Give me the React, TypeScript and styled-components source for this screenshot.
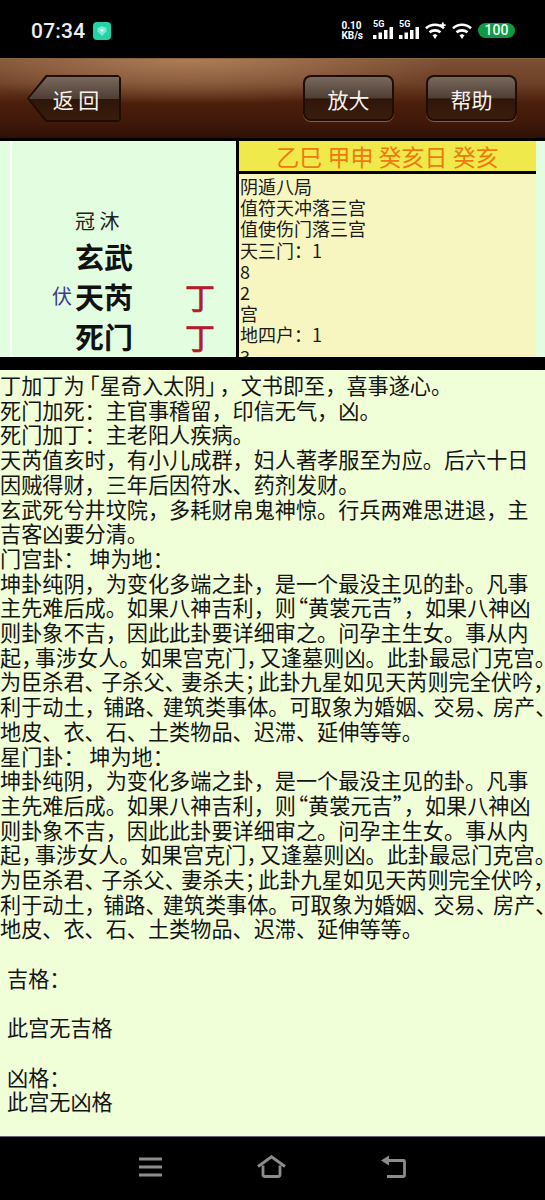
import React from "react";
import styled, { createGlobalStyle } from "styled-components";

const GlobalStyle = createGlobalStyle`
  html, body {
    margin: 0;
    padding: 0;
    background: #000;
  }
  body {
    font-family: "Noto Sans CJK SC", "Liberation Sans", sans-serif;
    text-spacing-trim: space-all;
  }
`;

const luckLines = ["阴遁八局", "值符天冲落三宫", "值使伤门落三宫", "天三门：1", "8", "2", "宫", "地四户：1", "3"];

// how much width each punctuation mark gives up on the squeezed lines
type Squeeze = Record<string, number>;

function Squeezed({ text, marks }: { text: string; marks: Squeeze }) {
  const parts = text.split(/(?=[，、；「」“”])|(?<=[，、；「」“”])/);
  return (
    <Line>
      {parts.map((part, i) =>
        marks[part] ? (
          <Mark key={i} $cut={marks[part]} $before={part === "「" || part === "“"}>
            {part}
          </Mark>
        ) : (
          part
        )
      )}
    </Line>
  );
}

function GuaBlock() {
  return (
    <>
      <Line>坤卦纯阴，为变化多端之卦，是一个最没主见的卦。凡事</Line>
      <Squeezed text="主先难后成。如果八神吉利，则“黄裳元吉”，如果八神凶" marks={{ "“": 9, "”": 10 }} />
      <Line>则卦象不吉，因此此卦要详细审之。问孕主生女。事从内</Line>
      <Squeezed text="起，事涉女人。如果宫克门，又逢墓则凶。此卦最忌门克宫。" marks={{ "，": 7.5 }} />
      <Squeezed text="为臣杀君、子杀父、妻杀夫；此卦九星如见天芮则完全伏吟，" marks={{ "、": 4.5, "；": 7.5 }} />
      <Squeezed text="利于动土，铺路、建筑类事体。可取象为婚姻、交易、房产、" marks={{ "，": 2.5, "、": 4 }} />
      <Line>地皮、衣、石、土类物品、迟滞、延伸等等。</Line>
    </>
  );
}

export default function App() {
  return (
    <Phone>
      <GlobalStyle />
      <StatusBar>
        <Clock>07:34</Clock>
        <AppBadge>
          <svg width="14" height="14" viewBox="0 0 14 14">
            <path d="M7 2l4.500 2v3.500L7 12 2.500 7.500V4z" fill="#7fe8d0" />
            <path d="M5 5.500h4L7 8z" fill="#e8fff8" />
          </svg>
        </AppBadge>
        <StatusRight>
          <NetSpeed>
            <span>0.10</span>
            <span>KB/s</span>
          </NetSpeed>
          <Signal />
          <Signal />
          <Wifi plus />
          <Wifi />
          <Battery>100</Battery>
        </StatusRight>
      </StatusBar>

      <Header>
        <BackButton>
          <BackFace>返 回</BackFace>
        </BackButton>
        <HeaderSpacer />
        <ToolButton>
          <ToolFace>放大</ToolFace>
        </ToolButton>
        <ToolButton>
          <ToolFace>帮助</ToolFace>
        </ToolButton>
      </Header>

      <Panels>
        <PalacePanel>
          <PalaceInner>
            <StateRow>冠 沐</StateRow>
            <GodRow>
              <Name>玄武</Name>
            </GodRow>
            <GodRow>
              <SideMark>伏</SideMark>
              <Name>天芮</Name>
              <Stem>丁</Stem>
            </GodRow>
            <GodRow>
              <Name>死门</Name>
              <Stem>丁</Stem>
            </GodRow>
          </PalaceInner>
        </PalacePanel>
        <InfoPanel>
          <DateBar>乙巳 甲申 癸亥日 癸亥</DateBar>
          <InfoList>
            {luckLines.map((line, i) => (
              <div key={i}>{line}</div>
            ))}
          </InfoList>
        </InfoPanel>
      </Panels>
      <Divider />

      <Body>
        <Squeezed text="丁加丁为「星奇入太阴」，文书即至，喜事遂心。" marks={{ "「": 6, "」": 7 }} />
        <Line>死门加死：主官事稽留，印信无气，凶。</Line>
        <Line>死门加丁：主老阳人疾病。</Line>
        <Line>天芮值亥时，有小儿成群，妇人著孝服至为应。后六十日</Line>
        <Line>因贼得财，三年后因符水、药剂发财。</Line>
        <Line>玄武死兮井坟院，多耗财帛鬼神惊。行兵两难思进退，主</Line>
        <Line>吉客凶要分清。</Line>
        <Line>门宫卦： 坤为地：</Line>
        <GuaBlock />
        <Line>星门卦： 坤为地：</Line>
        <GuaBlock />
        <Blank />
        <Line $indent>吉格：</Line>
        <Blank />
        <Line $indent>此宫无吉格</Line>
        <Blank />
        <Line $indent>凶格：</Line>
        <Line $indent>此宫无凶格</Line>
      </Body>

      <NavBar>
        <svg width="23" height="20" viewBox="0 0 23 20">
          <path d="M0 2h23M0 10h23M0 18h23" stroke="#8c8c8c" strokeWidth="2.800" fill="none" />
        </svg>
        <svg width="29" height="23" viewBox="0 0 29 23">
          <path
            d="M1 11.500L14.500 1.800 28 11.500M6 10.500v9a2 2 0 0 0 2 2h13a2 2 0 0 0 2-2v-9"
            stroke="#8c8c8c"
            strokeWidth="2.800"
            fill="none"
          />
        </svg>
        <svg width="25" height="23" viewBox="0 0 25 23">
          <path
            d="M6 5.500h16.500a1 1 0 0 1 1 1v13.500a1.500 1.500 0 0 1-1.500 1.500H6"
            stroke="#8c8c8c"
            strokeWidth="2.800"
            fill="none"
          />
          <path d="M0 5.500L8 .5v10z" fill="#8c8c8c" />
        </svg>
      </NavBar>
    </Phone>
  );
}

function Signal() {
  return (
    <SignalWrap>
      <SignalLabel>5G</SignalLabel>
      <svg width="20" height="12" viewBox="0 0 20 12">
        <rect x="0" y="8" width="3.500" height="4" fill="#fff" />
        <rect x="5.500" y="5.500" width="3.500" height="6.500" fill="#fff" />
        <rect x="11" y="3" width="3.500" height="9" fill="#fff" />
        <rect x="16.500" y="0" width="3.500" height="12" fill="#fff" />
      </svg>
    </SignalWrap>
  );
}

function Wifi({ plus }: { plus?: boolean }) {
  return (
    <svg width="21" height="18" viewBox="0 0 21 18">
      <g stroke="#fff" strokeWidth="2.600" fill="none">
        <path d="M1 6.200c5-4.600 13-4.600 18 0" />
        <path d="M4.500 10.200c3-2.500 8-2.500 11 0" />
      </g>
      <path d="M7.500 13.300l2.500-1.300 2.500 1.300-2.500 3.700z" fill="#fff" />
      {plus && <path d="M17.800 0.500v5.500M15 3.200h5.600" stroke="#fff" strokeWidth="1.800" />}
    </svg>
  );
}

const Phone = styled.div`
  width: 545px;
  height: 1200px;
  overflow: hidden;
  display: flex;
  flex-direction: column;
  background: #000;
`;

const StatusBar = styled.div`
  height: 58px;
  flex: none;
  box-sizing: border-box;
  padding: 3px 30px 0 31px;
  display: flex;
  align-items: center;
  color: #fff;
`;

const Clock = styled.div`
  font-family: "Roboto", sans-serif;
  font-size: 21px;
  font-weight: 500;
  color: #eee;
  letter-spacing: 0.2px;
`;

const AppBadge = styled.div`
  width: 18px;
  height: 18px;
  margin-left: 8px;
  border-radius: 4px;
  background: #20d4a8;
  display: flex;
  align-items: center;
  justify-content: center;
`;

const StatusRight = styled.div`
  margin-left: auto;
  display: flex;
  align-items: center;
  gap: 6px;
`;

const NetSpeed = styled.div`
  display: flex;
  flex-direction: column;
  font-family: "Roboto", sans-serif;
  font-size: 10px;
  font-weight: 700;
  line-height: 10px;
  margin-right: 4px;
`;

const SignalWrap = styled.div`
  position: relative;
  width: 20px;
  height: 17px;
  display: flex;
  align-items: flex-end;
`;

const SignalLabel = styled.span`
  position: absolute;
  left: 0;
  top: -2px;
  font-family: "Roboto", sans-serif;
  font-size: 9px;
  line-height: 9px;
  font-weight: 700;
`;

const Battery = styled.div`
  width: 37px;
  height: 15px;
  border-radius: 8px;
  background: #0f9a45;
  font-family: "Roboto", sans-serif;
  font-size: 14px;
  font-weight: 500;
  line-height: 15px;
  text-align: center;
  color: #f2fff5;
  margin-left: -1px;
`;

const Header = styled.div`
  height: 80px;
  flex: none;
  box-sizing: border-box;
  padding: 16px 28px 0 27px;
  display: flex;
  align-items: flex-start;
  gap: 32px;
  border-top: 1px solid #8a6240;
  background:
    radial-gradient(ellipse 260px 46px at 190px 0, rgba(190, 140, 100, 0.75), rgba(190, 140, 100, 0) 100%),
    linear-gradient(180deg, #7c5034 0%, #6e4128 30%, #4a1e0a 56%, #40190a 80%, #2e1005 100%);
`;

const HeaderSpacer = styled.div`
  flex: 1;
`;

const BackButton = styled.div`
  width: 94px;
  height: 47px;
  box-sizing: border-box;
  padding: 2px;
  background: #1e0c05;
  clip-path: polygon(0 50%, 20% 0, 97% 0, 100% 6%, 100% 94%, 97% 100%, 20% 100%);
  display: flex;
`;

const BackFace = styled.div`
  flex: 1;
  clip-path: polygon(0 50%, 20% 0, 100% 0, 100% 100%, 20% 100%);
  background: linear-gradient(180deg, #79685d 0%, #4f3e35 50%, #2f1609 52%, #3a1c0e 100%);
  color: #f6f2ee;
  font-size: 21px;
  line-height: 45px;
  text-align: center;
  padding-left: 4px;
  white-space: pre;
`;

const ToolButton = styled.div`
  width: 91px;
  height: 46px;
  box-sizing: border-box;
  padding: 2px;
  border-radius: 8px;
  background: #1e0c05;
  box-shadow: 0 1px 0 #8b5a38;
  display: flex;
`;

const ToolFace = styled.div`
  flex: 1;
  border-radius: 6px;
  background: linear-gradient(180deg, #79685d 0%, #4f3e35 50%, #2f1609 52%, #3a1c0e 100%);
  color: #f6f2ee;
  font-size: 21px;
  line-height: 44px;
  text-align: center;
`;

const Panels = styled.div`
  height: 216px;
  margin-top: 3px;
  flex: none;
  display: flex;
  background: #e2fde0;
`;

const PalacePanel = styled.div`
  width: 236px;
  flex: none;
  box-sizing: border-box;
  padding-left: 10px;
`;

const PalaceInner = styled.div`
  height: 100%;
  box-sizing: border-box;
  border-left: 2px solid #fff;
  padding: 65px 0 0 0;
  display: flex;
  flex-direction: column;
`;

const StateRow = styled.div`
  font-size: 20px;
  line-height: 30px;
  padding-left: 63px;
  color: #222;
  white-space: pre;
`;

const GodRow = styled.div`
  height: 40px;
  display: flex;
  align-items: center;
  position: relative;
  padding-left: 63px;
`;

const Name = styled.div`
  font-size: 29px;
  font-weight: 700;
  color: #111;
  line-height: 40px;
`;

const SideMark = styled.span`
  position: absolute;
  left: 40px;
  top: 7px;
  font-size: 20px;
  color: #3c3c90;
  line-height: 26px;
`;

const Stem = styled.span`
  position: absolute;
  left: 173px;
  top: 0;
  font-size: 30px;
  line-height: 40px;
  color: #b01c30;
  -webkit-text-stroke: 0.7px #b01c30;
`;

const InfoPanel = styled.div`
  width: 300px;
  flex: none;
  box-sizing: border-box;
  border-left: 3px solid #000;
  display: flex;
  flex-direction: column;
  overflow: hidden;
`;

const DateBar = styled.div`
  height: 30px;
  flex: none;
  background: #efe94c;
  border-bottom: 3px solid #000;
  color: #ee7a10;
  font-size: 23px;
  line-height: 30px;
  text-align: center;
`;

const InfoList = styled.div`
  flex: 1;
  overflow: hidden;
  background: #f8f6c0;
  padding: 2px 0 0 1px;
  font-size: 18px;
  line-height: 21.200px;
  color: #1a1a1a;
`;

const Divider = styled.div`
  height: 13px;
  flex: none;
  background: #000;
`;

const Body = styled.div`
  height: 767px;
  flex: none;
  box-sizing: border-box;
  padding-top: 3px;
  background: #f0ffd8;
  border-bottom: 1px solid #667;
  overflow: hidden;
  font-size: 21.150px;
  line-height: 24.700px;
  color: #141414;
`;

const Line = styled.div<{ $indent?: boolean }>`
  white-space: pre;
  padding-left: ${(p) => (p.$indent ? "7px" : "0")};
`;

const Mark = styled.span<{ $cut: number; $before?: boolean }>`
  margin-left: ${(p) => (p.$before ? `-${p.$cut}px` : "0")};
  margin-right: ${(p) => (p.$before ? "0" : `-${p.$cut}px`)};
`;

const Blank = styled.div`
  height: 24.700px;
`;

const NavBar = styled.div`
  flex: 1;
  display: flex;
  align-items: center;
  justify-content: center;
  gap: 95px;
  padding-bottom: 4px;
`;
